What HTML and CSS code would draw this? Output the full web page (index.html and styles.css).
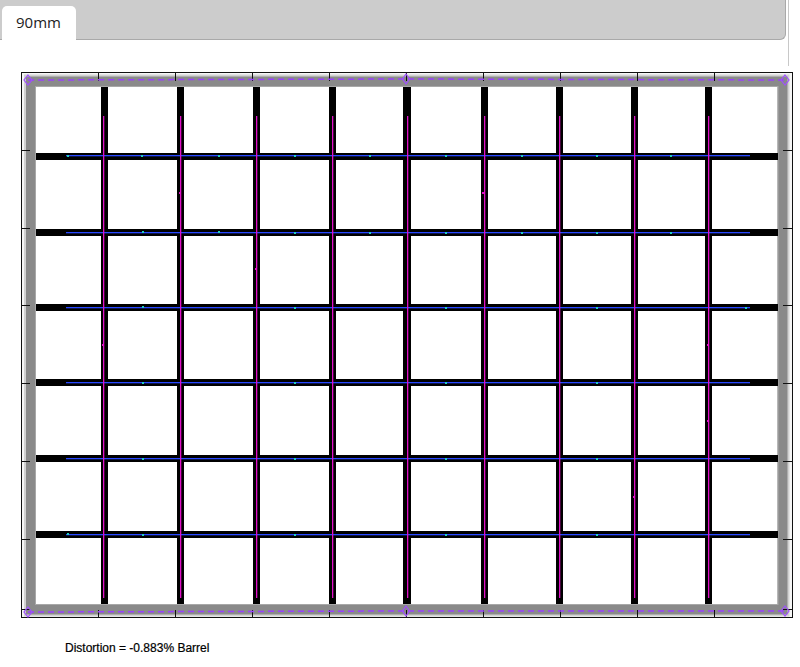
FILE: index.html
```html
<!DOCTYPE html>
<html>
	<head>
		<meta charset="utf-8">
		<title>90mm</title>
		<link rel="stylesheet" href="styles.css">
	</head>
	<body>
		<div class="panel">
			<div class="tabs">
				<div class="tab">90mm</div>
			</div>
		</div>

		<!--畸变图-->
		<svg class="chart" width="800" height="560" viewBox="0 66 800 560">
			<!--外框-->
			<rect x="21.5" y="72.5" width="771" height="545" fill="#f6f6f6" stroke="#111" stroke-width="1"/>
			<rect x="31" y="81.5" width="751.5" height="528" fill="#fff" stroke="#d2d2d2" stroke-width="14"/>
			<rect x="31" y="81.5" width="751.5" height="528" fill="#fff" stroke="#8a8a8a" stroke-width="10"/>
			<rect x="35.5" y="86.5" width="742.5" height="518" fill="none" stroke="#a8a8a8" stroke-width="1"/>

			<!--竖线-->
			<g fill="#000">
				<rect x="101" y="87" width="7" height="517"/>
				<rect x="177" y="87" width="7" height="517"/>
				<rect x="253" y="87" width="7" height="517"/>
				<rect x="329" y="87" width="7" height="517"/>
				<rect x="403" y="87" width="8" height="517"/>
				<rect x="481" y="87" width="7" height="517"/>
				<rect x="556" y="87" width="7" height="517"/>
				<rect x="631" y="87" width="7" height="517"/>
				<rect x="705" y="87" width="7" height="517"/>
			</g>
			<!--横线-->
			<g fill="#000">
				<rect x="36" y="153" width="742" height="7"/>
				<rect x="36" y="229" width="742" height="7"/>
				<rect x="36" y="304" width="742" height="7"/>
				<rect x="36" y="379" width="742" height="7"/>
				<rect x="36" y="455" width="742" height="7"/>
				<rect x="36" y="531" width="742" height="7"/>
			</g>

			<!--测量线-->
			<g fill="#2848ff">
				<rect x="66" y="155" width="684" height="1.3"/>
				<rect x="66" y="232" width="684" height="1.3"/>
				<rect x="66" y="307" width="684" height="1.3"/>
				<rect x="66" y="382" width="684" height="1.3"/>
				<rect x="66" y="458" width="684" height="1.3"/>
				<rect x="66" y="534" width="684" height="1.3"/>
			</g>
			<g fill="#e010c8">
				<rect x="103" y="116" width="1.3" height="482"/>
				<rect x="180" y="116" width="1.3" height="482"/>
				<rect x="256" y="116" width="1.3" height="482"/>
				<rect x="332" y="116" width="1.3" height="482"/>
				<rect x="407" y="116" width="1.3" height="482"/>
				<rect x="484" y="116" width="1.3" height="482"/>
				<rect x="559" y="116" width="1.3" height="482"/>
				<rect x="634" y="116" width="1.3" height="482"/>
				<rect x="708" y="116" width="1.3" height="482"/>
			</g>
			<g fill="#20d0c0">
				<rect x="141" y="155" width="2" height="2"/>
				<rect x="218" y="155" width="2" height="2"/>
				<rect x="294" y="155" width="2" height="2"/>
				<rect x="369" y="155" width="2" height="2"/>
				<rect x="445" y="155" width="2" height="2"/>
				<rect x="521" y="155" width="2" height="2"/>
				<rect x="596" y="155" width="2" height="2"/>
				<rect x="670" y="155" width="2" height="2"/>
				<rect x="142" y="231" width="2" height="2"/>
				<rect x="218" y="231" width="2" height="2"/>
				<rect x="294" y="232" width="2" height="2"/>
				<rect x="369" y="232" width="2" height="2"/>
				<rect x="445" y="232" width="2" height="2"/>
				<rect x="521" y="232" width="2" height="2"/>
				<rect x="596" y="232" width="2" height="2"/>
				<rect x="670" y="232" width="2" height="2"/>
				<rect x="142" y="306" width="2" height="2"/>
				<rect x="294" y="307" width="2" height="2"/>
				<rect x="445" y="307" width="2" height="2"/>
				<rect x="596" y="307" width="2" height="2"/>
				<rect x="745" y="307" width="2" height="2"/>
				<rect x="142" y="382" width="2" height="2"/>
				<rect x="294" y="382" width="2" height="2"/>
				<rect x="445" y="382" width="2" height="2"/>
				<rect x="596" y="382" width="2" height="2"/>
				<rect x="142" y="458" width="2" height="2"/>
				<rect x="294" y="458" width="2" height="2"/>
				<rect x="445" y="458" width="2" height="2"/>
				<rect x="596" y="458" width="2" height="2"/>
				<rect x="142" y="534" width="2" height="2"/>
				<rect x="294" y="534" width="2" height="2"/>
				<rect x="445" y="534" width="2" height="2"/>
				<rect x="596" y="534" width="2" height="2"/>
				<rect x="67" y="533" width="2" height="2"/>
				<rect x="67" y="155" width="2" height="2"/>
			</g>
			<g fill="#e010c8">
				<rect x="102" y="344" width="2" height="2"/>
				<rect x="179" y="192" width="2" height="2"/>
				<rect x="255" y="268" width="2" height="2"/>
				<rect x="707" y="344" width="2" height="2"/>
				<rect x="707" y="420" width="2" height="2"/>
				<rect x="633" y="496" width="2" height="2"/>
				<rect x="482" y="192" width="2" height="2"/>
			</g>

			<!--刻度-->
			<g stroke="#111" stroke-width="1">
				<line x1="98.5" y1="72" x2="98.5" y2="81"/>
				<line x1="175.5" y1="72" x2="175.5" y2="81"/>
				<line x1="252.5" y1="72" x2="252.5" y2="81"/>
				<line x1="329.5" y1="72" x2="329.5" y2="81"/>
				<line x1="406.5" y1="72" x2="406.5" y2="81"/>
				<line x1="483.5" y1="72" x2="483.5" y2="81"/>
				<line x1="560.5" y1="72" x2="560.5" y2="81"/>
				<line x1="637.5" y1="72" x2="637.5" y2="81"/>
				<line x1="714.5" y1="72" x2="714.5" y2="81"/>
				<line x1="98.5" y1="610" x2="98.5" y2="617"/>
				<line x1="175.5" y1="610" x2="175.5" y2="617"/>
				<line x1="252.5" y1="610" x2="252.5" y2="617"/>
				<line x1="329.5" y1="610" x2="329.5" y2="617"/>
				<line x1="406.5" y1="610" x2="406.5" y2="617"/>
				<line x1="483.5" y1="610" x2="483.5" y2="617"/>
				<line x1="560.5" y1="610" x2="560.5" y2="617"/>
				<line x1="637.5" y1="610" x2="637.5" y2="617"/>
				<line x1="714.5" y1="610" x2="714.5" y2="617"/>
				<line x1="21" y1="150.5" x2="30" y2="150.5"/>
				<line x1="21" y1="228.5" x2="30" y2="228.5"/>
				<line x1="21" y1="305.5" x2="30" y2="305.5"/>
				<line x1="21" y1="383.5" x2="30" y2="383.5"/>
				<line x1="21" y1="461.5" x2="30" y2="461.5"/>
				<line x1="21" y1="539.5" x2="30" y2="539.5"/>
				<line x1="783" y1="150.5" x2="792" y2="150.5"/>
				<line x1="783" y1="228.5" x2="792" y2="228.5"/>
				<line x1="783" y1="305.5" x2="792" y2="305.5"/>
				<line x1="783" y1="383.5" x2="792" y2="383.5"/>
				<line x1="783" y1="461.5" x2="792" y2="461.5"/>
				<line x1="783" y1="539.5" x2="792" y2="539.5"/>
				<line x1="21" y1="609.5" x2="30" y2="609.5"/>
				<line x1="783" y1="609.5" x2="792" y2="609.5"/>
			</g>

			<!--虚线-->
			<g stroke="#9a40ff" stroke-width="1.5" stroke-dasharray="6 4" fill="none">
				<polyline points="28,80 406,79 785,80"/>
				<polyline points="28,612 406,611 785,611"/>
			</g>
			<g stroke="#a050ff" stroke-width="1.2" fill="none">
				<path d="M28 75 L32 80 L28 85 L24 80 Z"/>
				<path d="M406 74 L409.5 79 L406 84 L402.5 79 Z"/>
				<path d="M785 75 L789 80 L785 85 L781 80 Z"/>
				<path d="M28 607 L32 612 L28 617 L24 612 Z"/>
				<path d="M406 606 L409.5 611 L406 616 L402.5 611 Z"/>
				<path d="M785 606 L789 611 L785 616 L781 611 Z"/>
			</g>
		</svg>

		<p class="caption">Distortion = -0.883% Barrel</p>
	</body>
</html>
```
FILE: styles.css
```css
  html,body{
	  margin: 0;
	  padding: 0;
	  background-color: #ffffff;
  }
  .panel{
	  width: 789px;
	  height: 66px;
	  border-right: #c8c8c8 solid 1px;
	  box-sizing: border-box;
  }
  .tabs{
	  width: 786px;
	  height: 40px;
	  box-sizing: border-box;
	  background-color: #cccccc;
	  border: #a9a9a9 solid 1px;
	  border-top: none;
	  border-left: none;
	  border-bottom-right-radius: 6px;
	  padding: 6px 0 0 2px;
	  display: flex;
  }
  .tab{
	  width: 74px;
	  height: 34px;
	  box-sizing: border-box;
	  background-color: #ffffff;
	  border-radius: 5px 5px 0 0;
	  font-family: "Open Sans", "Liberation Sans", sans-serif;
	  font-size: 15px;
	  color: #222;
	  line-height: 32px;
	  padding-left: 14px;
  }
  .chart{
	  display: block;
  }
  .caption{
	  margin: 15px 0 0 65px;
	  font-family: "Liberation Sans", Arial, sans-serif;
	  font-size: 12px;
	  color: #000;
	  line-height: 14px;
	  -webkit-text-stroke: 0.2px #000;
  }
```
